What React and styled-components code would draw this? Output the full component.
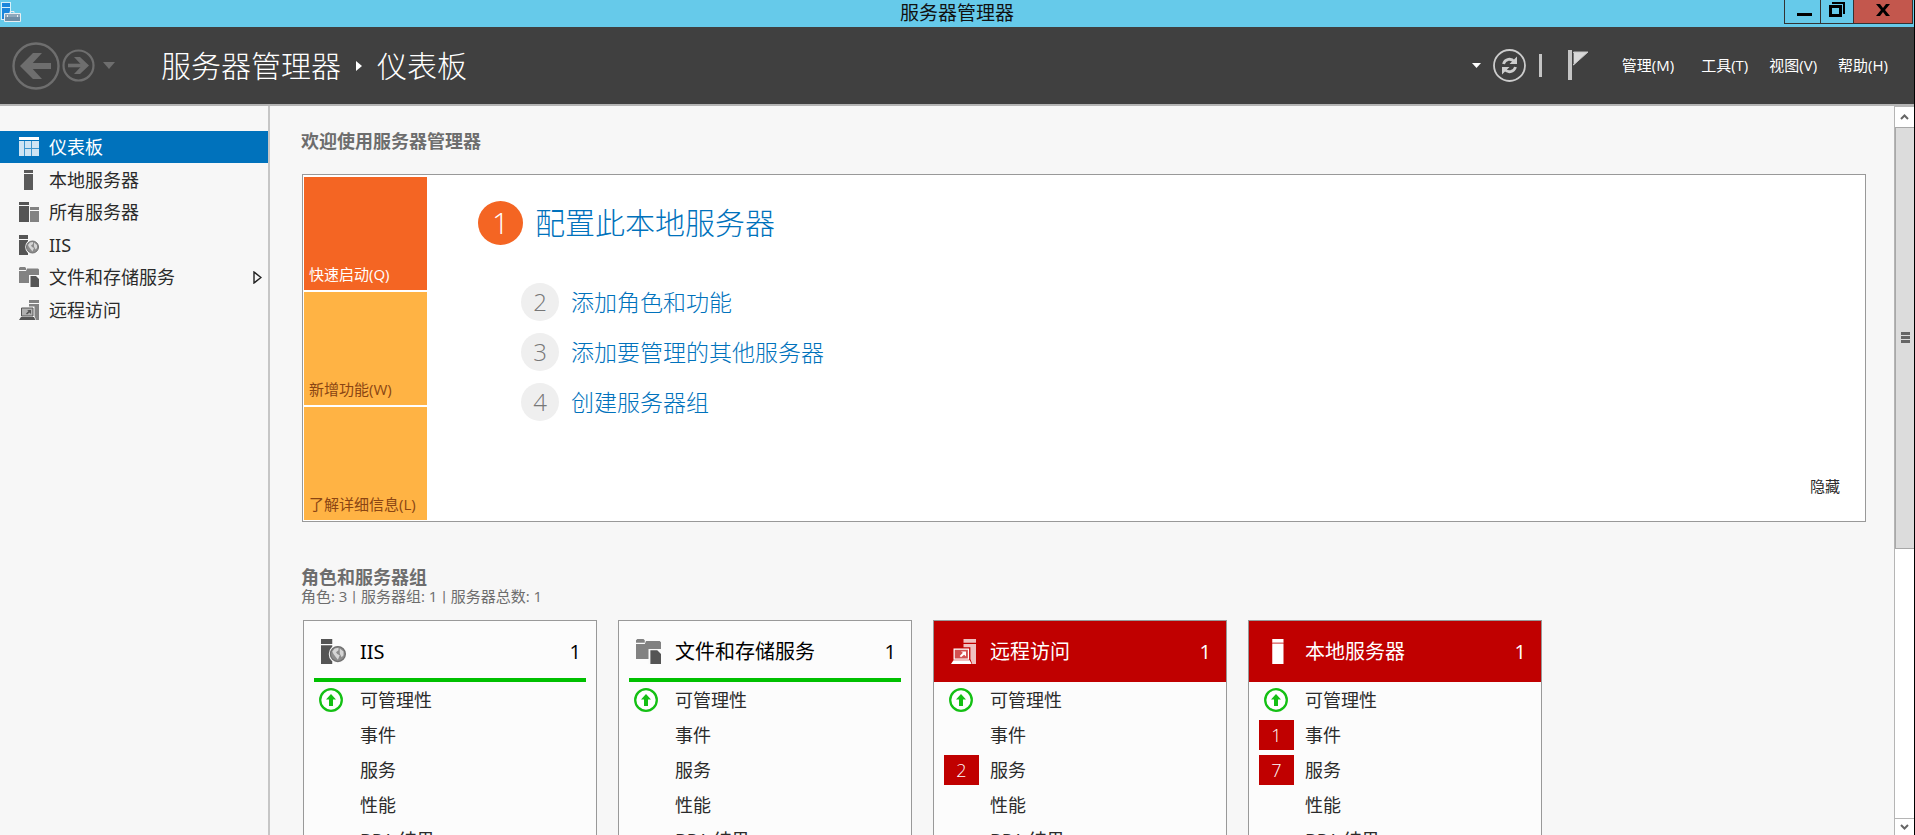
import React from 'react';
import styled, { createGlobalStyle, css } from 'styled-components';

const GlobalStyle = createGlobalStyle`
  * { box-sizing: border-box; }
  body {
    margin: 0;
    overflow: hidden;
    font-family: "Open Sans", "Noto Sans CJK SC", sans-serif;
    color: #2b2b2b;
  }
  h1, h2, p, ul, ol { margin: 0; padding: 0; font-weight: inherit; }
  ul, ol { list-style: none; }
  a { color: inherit; text-decoration: none; }
  button { font: inherit; color: inherit; border: 0; padding: 0; background: none; cursor: pointer; }
  svg { display: block; flex: none; }
`;

const Window = styled.div`
  display: flex;
  flex-direction: column;
  height: 100vh;
  background: #f7f7f7;
  border-right: 1px solid #000;
`;

/* ---------- title bar ---------- */
const TitleBar = styled.header`
  display: grid;
  grid-template-columns: 1fr auto 1fr;
  height: 27px;
  flex: none;
  background: #66caea;
  color: #111;
`;
const TitleIcon = styled.div`
  padding: 2px 0 0 1px;
`;
const TitleText = styled.div`
  font-size: 19px;
  line-height: 26px;
`;
const WindowButtons = styled.div`
  display: flex;
  justify-content: flex-end;
  height: 24px;
  padding-right: 1px;
`;
const WindowButton = styled.button`
  display: flex;
  align-items: center;
  justify-content: center;
  width: ${(p) => p.$width}px;
  border: solid #333;
  border-width: 0 1px 1px 0;
  background: ${(p) => (p.$close ? '#c3574d' : 'transparent')};
  &:first-child { border-left-width: 1px; }
`;

/* ---------- navigation bar ---------- */
const NavBar = styled.nav`
  display: flex;
  align-items: center;
  height: 79px;
  flex: none;
  padding: 0 26px 0 12px;
  background: #404040;
  border-bottom: 2px solid #b5b5b5;
  color: #fff;
`;
const History = styled.div`
  display: flex;
  align-items: center;
  gap: 2px;
  width: 149px;
  color: #6e6e6e;
`;
const HistoryCaret = styled.button`
  padding-left: 6px;
`;
const Crumbs = styled.h1`
  display: flex;
  align-items: center;
  gap: 15px;
  flex: 1;
  font-size: 30px;
  line-height: 40px;
  font-weight: 300;
`;
const Tools = styled.div`
  display: flex;
  align-items: center;
  gap: 12px;
  margin-right: 32px;
  color: #ccc;
`;
const Divider = styled.span`
  width: 3px;
  height: 23px;
  margin: 0 14px 0 1px;
  background: #c4c4c4;
`;
const Menu = styled.div`
  display: flex;
  gap: 21px;
  padding-bottom: 2px;
  font-size: 15px;
  line-height: 20px;
  button:first-child { margin-right: 6px; }
`;

/* ---------- body ---------- */
const Body = styled.div`
  display: flex;
  flex: 1;
  min-height: 0;
`;
const Sidebar = styled.aside`
  width: 270px;
  flex: none;
  padding-top: 25px;
  border-right: 2px solid #c6c6c6;
`;
const SideList = styled.div`
  display: flex;
  flex-direction: column;
  justify-content: space-between;
  height: 195px;
`;
const SideItem = styled.a`
  display: flex;
  align-items: center;
  gap: 10px;
  height: 32px;
  padding: 0 6px 0 19px;
  font-size: 18px;
  line-height: 24px;
  ${(p) => p.$active && css`
    background: #0072bc;
    color: #fff;
  `}
`;
const SideLabel = styled.span`
  flex: 1;
`;
const Latin = styled.span`
  font-family: "Noto Sans", sans-serif;
`;

const Content = styled.main`
  flex: 1;
  min-width: 0;
  overflow: hidden;
  padding: 23px 28px 0 31px;
`;
const Heading = styled.h2`
  color: #6d6d6d;
  font-size: 18px;
  line-height: 24px;
  font-weight: 700;
`;
const Welcome = styled.section`
  display: flex;
  margin: 21px 0 43px 1px;
  padding: 2px 1px 1px;
  background: #fff;
  border: 1px solid #999;
`;
const Tiles = styled.div`
  display: flex;
  flex-direction: column;
  gap: 2px;
  width: 123px;
`;
const Tile = styled.button`
  display: flex;
  align-items: flex-end;
  height: 113px;
  padding: 0 5px 6px;
  font-size: 15px;
  line-height: 20px;
  white-space: nowrap;
  background: ${(p) => (p.$active ? '#f46523' : '#ffb344')};
  color: ${(p) => (p.$active ? '#fff' : '#8a4513')};
`;
const Steps = styled.ol`
  flex: 1;
  padding: 24px 0 0 51px;
`;
const Step = styled.li`
  display: flex;
  align-items: center;
  gap: 12px;
  height: 38px;
  margin: 0 0 12px 43px;
  color: #0072bc;
  font-size: 23px;
  line-height: 32px;
  font-weight: 300;
  ${(p) => p.$main && css`
    height: 44px;
    margin: 0 0 38px;
    font-size: 30px;
    line-height: 40px;
  `}
`;
const StepNumber = styled.span`
  display: flex;
  align-items: center;
  justify-content: center;
  width: 38px;
  height: 38px;
  border-radius: 50%;
  background: #efefef;
  color: #777;
  font-size: 24px;
  ${(p) => p.$main && css`
    width: 45px;
    height: 44px;
    background: #f46523;
    color: #fff;
    font-size: 30px;
  `}
`;
const Hide = styled.button`
  align-self: flex-end;
  margin: 0 24px 24px 0;
  font-size: 15px;
  line-height: 20px;
`;
const Summary = styled.p`
  color: #6d6d6d;
  font-size: 15px;
  line-height: 20px;
  margin: -3px 0 14px;
`;
const Pipe = styled.span`
  padding: 0 1px;
  font-family: Roboto, sans-serif;
  line-height: 0;
`;
const Cards = styled.div`
  display: flex;
  gap: 21px;
  padding-left: 2px;
`;
const Card = styled.article`
  width: 294px;
  flex: none;
  background: #fcfcfc;
  border: 1px solid #999;
`;
const CardHead = styled.div`
  display: flex;
  align-items: center;
  height: 61px;
  padding: 0 15px 0 17px;
  font-size: 20px;
  line-height: 28px;
  color: #000;
  ${(p) => p.$alert && css`
    background: #c00000;
    color: #fff;
  `}
  ${(p) => !p.$alert && css`
    margin: 0 10px;
    padding: 4px 5px 0 7px;
    border-bottom: 4px solid #00c000;
  `}
`;
const CardTitle = styled.span`
  flex: 1;
  padding-left: 14px;
`;
const Rows = styled.ul`
  padding: 0 10px;
`;
const Row = styled.li`
  display: grid;
  grid-template-columns: 35px 1fr;
  gap: 11px;
  align-items: center;
  height: 35px;
  padding: 3px 0 2px;
  font-size: 18px;
  line-height: 24px;
`;
const Badge = styled.span`
  background: #c00000;
  color: #fff;
  line-height: 30px;
  font-weight: 300;
  text-align: center;
`;
const StatusCell = styled.span`
  padding-left: 5px;
`;

/* ---------- scroll bar ---------- */
const ScrollBar = styled.div`
  display: flex;
  flex-direction: column;
  width: 20px;
  flex: none;
  background: #fff;
  border-left: 1px solid #b5b5b5;
`;
const ScrollButton = styled.button`
  display: flex;
  align-items: center;
  justify-content: center;
  height: ${(p) => (p.$down ? 17 : 21)}px;
  border-top: 1px solid #b5b5b5;
`;
const Track = styled.div`
  flex: 1;
`;
const Thumb = styled.div`
  display: flex;
  align-items: center;
  justify-content: center;
  height: 61%;
  background: #dcdcdc;
  border: 1px solid #a8a8a8;
  border-width: 1px 0 1px 1px;
`;

/* ---------- drawings ---------- */
const AppIcon = () => (
  <svg width="20" height="20" viewBox="0 0 20 20">
    <path d="M0 0h10v18H0z" fill="#d5f0fa" />
    <path d="M1 1h8v4H1zM1 6h8v11H1z" fill="#1a86dc" />
    <path d="M9 11V9.500h4V11" fill="none" stroke="#e8eef2" />
    <path d="M3.500 11.500h16v8h-16z" fill="#6f8fa8" stroke="#e8eef2" />
    <path d="M4 12h15v3H4z" fill="#8fa9bd" />
    <path d="M6 13h1v2H6zM16 13h1v2h-1z" fill="#e8eef2" />
  </svg>
);
const BackIcon = () => (
  <svg width="48" height="48" viewBox="0 0 48 48" fill="none" stroke="currentColor">
    <circle cx="24" cy="24" r="22.500" strokeWidth="2.400" />
    <path d="M39 24H13" strokeWidth="6" />
    <path d="M21 11h9L18 24l12 13h-9L8 24z" fill="currentColor" stroke="none" />
  </svg>
);
const ForwardIcon = () => (
  <svg width="33" height="33" viewBox="0 0 33 33" fill="none" stroke="currentColor">
    <circle cx="16.500" cy="16.500" r="15" strokeWidth="2.200" />
    <path d="M6 16.500h18" strokeWidth="3.600" />
    <path d="M18 8h-6l8 8.500-8 8.500h6l9-8.500z" fill="currentColor" stroke="none" />
  </svg>
);
const Caret = ({ width, height, fill = 'currentColor' }) => (
  <svg width={width} height={height} viewBox="0 0 12 7" preserveAspectRatio="none">
    <path d="M0 0h12L6 7z" fill={fill} />
  </svg>
);
const CrumbArrow = () => (
  <svg width="6" height="10" viewBox="0 0 6 10"><path d="M0 0l6 5-6 5z" fill="#fff" /></svg>
);
const RefreshIcon = () => (
  <svg width="33" height="33" viewBox="0 0 33 33" fill="none" stroke="currentColor">
    <circle cx="16.500" cy="16.500" r="15.500" strokeWidth="1.800" />
    <path d="M10.500 15c1.500-5.500 8-6 10.500-2.500M22.500 18c-1.500 5.500-8 6-10.500 2.500" strokeWidth="2.800" />
    <path d="M24 7.500v7.500h-7.500zM9 25.500V18h7.500z" fill="currentColor" stroke="none" />
  </svg>
);
const FlagIcon = () => (
  <svg width="22" height="32" viewBox="0 0 22 32">
    <path d="M0 0h4v30H0z" fill="#c4c4c4" />
    <path d="M5.500 2H20L5.500 15z" fill="#d8d8d8" stroke="#c4c4c4" />
    <path d="M5.500 3v11" stroke="#777" />
  </svg>
);
const ExpandIcon = () => (
  <svg width="9" height="13" viewBox="0 0 9 13"><path d="M1 1v11l7-5.500z" fill="none" stroke="#222" strokeWidth="1.400" /></svg>
);
const HealthyIcon = () => (
  <svg width="24" height="24" viewBox="0 0 24 24">
    <circle cx="12" cy="12" r="10.800" fill="#fff" stroke="#14c014" strokeWidth="2.300" />
    <path d="M12 6l5 5.500h-3V18h-4v-6.500H7z" fill="#14c014" />
  </svg>
);
const GLYPHS = {
  dashboard: () => (
    <>
      <path d="M0 0h20v3H0z" fill="#fff" />
      <path d="M0 4h20v15H0z" fill="#cfe4f3" />
      <path d="M5.500 4v15M12.500 4v15M6 11.500h14" stroke="#3d95cd" />
    </>
  ),
  server: (light) => (
    <>
      <path d="M5 0h9v3H5zM5 4h9v16H5z" fill={light ? '#fff' : '#5a5a5a'} />
      {light && <path d="M5 3h9v1H5z" fill="#e08080" />}
    </>
  ),
  servers: () => (
    <>
      <path d="M0 0h10v3H0zM0 4h10v16H0z" fill="#555" />
      <path d="M11 5h9v3h-9zM11 9h9v11h-9z" fill="#828282" />
    </>
  ),
  iis: () => (
    <>
      <path d="M0 0h9v4H0zM0 5h9v15H0z" fill="#555" />
      <circle cx="13.500" cy="12" r="7.300" fill="#f9f9f9" />
      <circle cx="13.500" cy="12" r="6" fill="#8c8c8c" stroke="#6f6f6f" />
      <path d="M9 10l2-2.500 3-.500v2l-2 1.500 1 1.500 2 1-1.500 3.500-2-2.500-1.500-2zM15 7.500l3 2.500v3l-1.500 1.500-1.500-3z" fill="#d5d5d5" />
    </>
  ),
  files: () => (
    <>
      <path d="M0 1l1-1h5l1 1v2H0zM0 4h7l1-2.500h11l1 1V16H0z" fill="#828282" />
      <path d="M10 8h10v12H10z" fill="#f9f9f9" />
      <path d="M11.500 9h5.500l3 3v8h-8.500z" fill="#555" />
    </>
  ),
  remote: (light) => (
    <>
      <path d="M10 0h10v3H10zM10 4h10v16H10z" fill={light ? '#f0c0c0' : '#828282'} />
      <path d="M1 6.500h14.500V16l1.500 4H0l1-4z" fill={light ? '#c00000' : '#f9f9f9'} />
      <path d="M2.500 8h11.500v8H2.500z" fill={light ? '#d35050' : '#b0b0b0'} stroke={light ? '#fff' : '#555'} />
      <path d="M2 17h13l1.500 3H0z" fill={light ? '#fff' : '#555'} />
      <path d="M8 10h4v4l-1.500-1.500L8 14.500 7 13.500 9.500 11z" fill={light ? '#fff' : '#555'} />
    </>
  ),
};
const Glyph = ({ name, size = 20, light }) => (
  <svg width={size} height={size} viewBox="0 0 20 20">{GLYPHS[name](light)}</svg>
);

/* ---------- data ---------- */
const NAV = [
  { icon: 'dashboard', label: '仪表板', active: true },
  { icon: 'server', label: '本地服务器' },
  { icon: 'servers', label: '所有服务器' },
  { icon: 'iis', label: 'IIS', latin: true },
  { icon: 'files', label: '文件和存储服务', expandable: true },
  { icon: 'remote', label: '远程访问' },
];
const METRICS = ['可管理性', '事件', '服务', '性能', 'BPA 结果'];
const CARDS = [
  { icon: 'iis', label: 'IIS', latin: true, counts: {} },
  { icon: 'files', label: '文件和存储服务', counts: {} },
  { icon: 'remote', label: '远程访问', alert: true, counts: { 服务: 2 } },
  { icon: 'server', label: '本地服务器', alert: true, counts: { 事件: 1, 服务: 7 } },
];
const STEPS = ['配置此本地服务器', '添加角色和功能', '添加要管理的其他服务器', '创建服务器组'];
const TILES = ['快速启动(Q)', '新增功能(W)', '了解详细信息(L)'];
const MENU = ['管理(M)', '工具(T)', '视图(V)', '帮助(H)'];

const Name = ({ item }) => (item.latin ? <Latin>{item.label}</Latin> : item.label);

const RoleCard = ({ card }) => (
  <Card>
    <CardHead $alert={card.alert}>
      <Glyph name={card.icon} size={25} light={card.alert} />
      <CardTitle><Name item={card} /></CardTitle>
      <span>1</span>
    </CardHead>
    <Rows>
      {METRICS.map((metric, i) => (
        <Row key={metric}>
          {card.counts[metric]
            ? <Badge>{card.counts[metric]}</Badge>
            : <StatusCell>{i === 0 && <HealthyIcon />}</StatusCell>}
          <span>{metric}</span>
        </Row>
      ))}
    </Rows>
  </Card>
);

export default function App() {
  return (
    <Window>
      <GlobalStyle />
      <TitleBar>
        <TitleIcon><AppIcon /></TitleIcon>
        <TitleText>服务器管理器</TitleText>
        <WindowButtons>
          <WindowButton $width={37} aria-label="最小化">
            <svg width="19" height="24"><path d="M4 13h15v3H4z" /></svg>
          </WindowButton>
          <WindowButton $width={33} aria-label="还原">
            <svg width="16" height="24" fill="none" stroke="#000">
              <path d="M1.500 6.500h10v9h-10z" strokeWidth="3" />
              <path d="M3 3h12v11" strokeWidth="2" />
            </svg>
          </WindowButton>
          <WindowButton $width={59} $close aria-label="关闭">
            <svg width="14" height="24"><path d="M0 4h4l3 4 3-4h4L9 10l5 6h-4l-3-4-3 4H0l5-6z" /></svg>
          </WindowButton>
        </WindowButtons>
      </TitleBar>

      <NavBar>
        <History>
          <button aria-label="后退"><BackIcon /></button>
          <button aria-label="前进"><ForwardIcon /></button>
          <HistoryCaret aria-label="历史记录"><Caret width={12} height={7} /></HistoryCaret>
        </History>
        <Crumbs><span>服务器管理器</span><CrumbArrow /><span>仪表板</span></Crumbs>
        <Tools>
          <Caret width={9} height={5} fill="#fff" />
          <button aria-label="刷新"><RefreshIcon /></button>
          <Divider />
          <button aria-label="通知"><FlagIcon /></button>
        </Tools>
        <Menu>{MENU.map((label) => <button key={label}>{label}</button>)}</Menu>
      </NavBar>

      <Body>
        <Sidebar>
          <SideList>
            {NAV.map((item) => (
              <SideItem key={item.label} href="#" $active={item.active}>
                <Glyph name={item.icon} />
                <SideLabel><Name item={item} /></SideLabel>
                {item.expandable && <ExpandIcon />}
              </SideItem>
            ))}
          </SideList>
        </Sidebar>

        <Content>
          <Heading>欢迎使用服务器管理器</Heading>
          <Welcome>
            <Tiles>
              {TILES.map((label, i) => <Tile key={label} $active={i === 0}>{label}</Tile>)}
            </Tiles>
            <Steps>
              {STEPS.map((label, i) => (
                <Step key={label} $main={i === 0}>
                  <StepNumber $main={i === 0}>{i + 1}</StepNumber>
                  <a href="#">{label}</a>
                </Step>
              ))}
            </Steps>
            <Hide>隐藏</Hide>
          </Welcome>

          <Heading>角色和服务器组</Heading>
          <Summary>
            角色: 3 <Pipe>|</Pipe> 服务器组: 1 <Pipe>|</Pipe> 服务器总数: 1
          </Summary>
          <Cards>{CARDS.map((card) => <RoleCard key={card.label} card={card} />)}</Cards>
        </Content>

        <ScrollBar>
          <ScrollButton aria-label="向上滚动">
            <svg width="9" height="6"><path d="M1 5l3.500-3.500L8 5" fill="none" stroke="#666" strokeWidth="2" /></svg>
          </ScrollButton>
          <Track>
            <Thumb>
              <svg width="9" height="11"><path d="M0 1.500h9M0 5.500h9M0 9.500h9" stroke="#666" strokeWidth="3" /></svg>
            </Thumb>
          </Track>
          <ScrollButton $down aria-label="向下滚动">
            <svg width="9" height="6"><path d="M1 1l3.500 3.500L8 1" fill="none" stroke="#666" strokeWidth="2" /></svg>
          </ScrollButton>
        </ScrollBar>
      </Body>
    </Window>
  );
}
